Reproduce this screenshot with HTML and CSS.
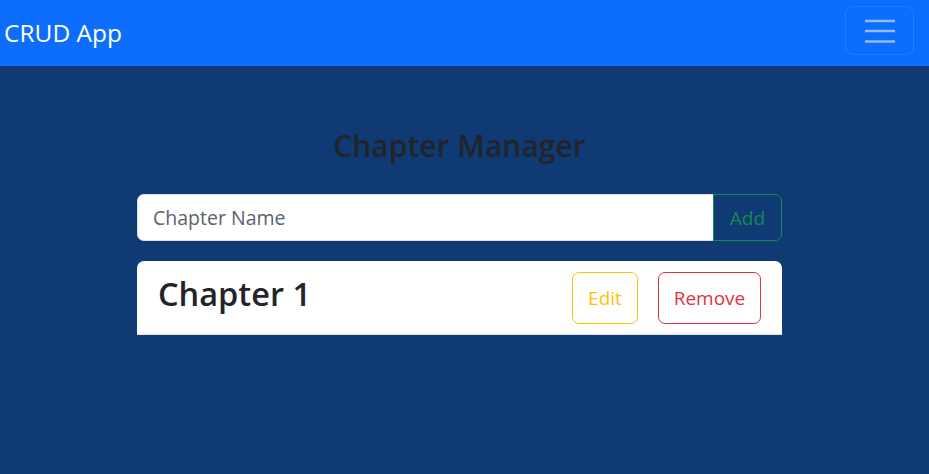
FILE: index.html
```html
<!DOCTYPE html>
<html lang="en">
<head>
<meta charset="utf-8">
<title>CRUD App</title>
<link rel="stylesheet" href="styles.css">
</head>
<body>
<nav class="navbar">
  <a class="brand" href="#">CRUD App</a>
  <button class="toggler" type="button" aria-label="Toggle navigation">
    <svg class="toggler-icon" viewBox="0 0 30 30" width="30" height="30" aria-hidden="true">
      <path d="M0.5 5h29M0.5 15h29M0.5 25.5h29" stroke="rgba(255,255,255,0.55)" stroke-width="2.6" stroke-linecap="round"/>
    </svg>
  </button>
</nav>
<main class="main">
  <h2 class="title">Chapter Manager</h2>
  <form class="input-group">
    <input class="field" type="text" placeholder="Chapter Name">
    <button class="btn btn-add" type="button">Add</button>
  </form>
  <ul class="list">
    <li class="item">
      <h3 class="item-name">Chapter 1</h3>
      <div class="actions">
        <button class="btn btn-edit" type="button">Edit</button>
        <button class="btn btn-remove" type="button">Remove</button>
      </div>
    </li>
  </ul>
</main>
</body>
</html>
```

FILE: styles.css
```css
* { box-sizing: border-box; }
html, body { margin: 0; padding: 0; }
body {
  background: #0f3a74;
  font-family: "Open Sans", "Noto Sans", sans-serif;
  color: #212529;
  height: 474px;
  overflow: hidden;
}
.navbar {
  height: 66px;
  background: #0d6efd;
  display: flex;
  align-items: center;
  justify-content: space-between;
  padding: 0 15px 0 4px;
}
.brand {
  color: #fff;
  text-decoration: none;
  font-size: 24.5px;
  line-height: 30px;
  margin-top: -1px;
}
.toggler {
  width: 69px;
  height: 49px;
  margin-top: -5px;
  background: transparent;
  border: 1px solid rgba(255,255,255,0.1);
  border-radius: 8px;
  display: flex;
  align-items: center;
  justify-content: center;
  padding: 0;
}
.toggler-icon { display: block; }
.main {
  width: 645px;
  margin-left: 137px;
  display: flex;
  flex-direction: column;
}
.title {
  margin: 60px 0 0;
  text-align: center;
  font-size: 30px;
  line-height: 40px;
  font-weight: 600;
  color: #212529;
}
.input-group {
  margin: 28px 0 0;
  display: flex;
  height: 47px;
}
.field {
  flex: 1;
  min-width: 0;
  border: 1px solid #dee2e6;
  border-right: none;
  border-radius: 7px 0 0 7px;
  background: #fff;
  padding: 0 15px;
  font-family: inherit;
  font-size: 19.5px;
  color: #212529;
  outline: none;
}
.field::placeholder { color: #5c636a; }
.btn {
  font-family: inherit;
  background: transparent;
  cursor: pointer;
  border: 1px solid;
  font-size: 19px;
  padding: 0;
  display: flex;
  align-items: center;
  justify-content: center;
}
.btn-add {
  width: 69px;
  color: #198754;
  border-color: #198754;
  border-radius: 0 7px 7px 0;
}
.list {
  list-style: none;
  margin: 20px 0 0;
  padding: 0;
}
.item {
  background: #fff;
  height: 74px;
  border-bottom: 1px solid #dee2e6;
  border-radius: 7px 7px 0 0;
  display: flex;
  align-items: center;
  justify-content: space-between;
  padding: 0 21px;
}
.item-name {
  margin: 0 0 7px;
  font-size: 32.5px;
  line-height: 40px;
  font-weight: 600;
  color: #212529;
}
.actions {
  display: flex;
  gap: 20px;
}
.btn-edit, .btn-remove {
  height: 52px;
  border-radius: 7px;
}
.btn-edit {
  width: 66px;
  color: #ffc107;
  border-color: #ffc107;
}
.btn-remove {
  width: 103px;
  color: #dc3545;
  border-color: #dc3545;
}
```
